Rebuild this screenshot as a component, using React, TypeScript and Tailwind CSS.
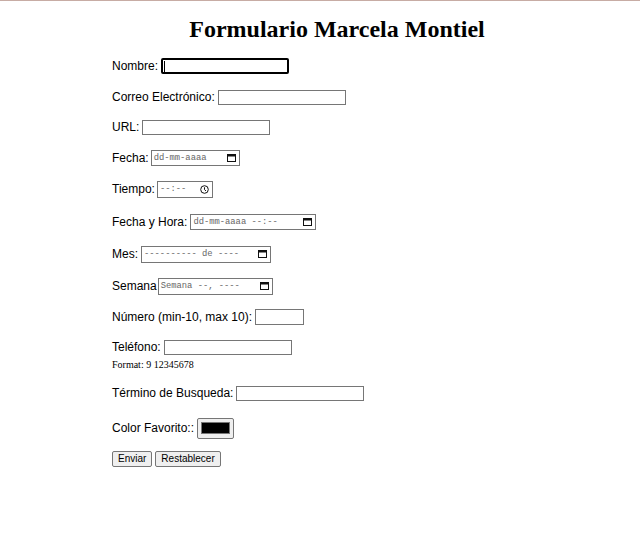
import React from "react";

const Cal = () => (
  <svg width="9" height="8" viewBox="0 0 9 8" className="shrink-0">
    <rect x="0.5" y="0.5" width="8" height="7" fill="none" stroke="#111" strokeWidth="1" />
    <rect x="0.5" y="0.5" width="8" height="2" fill="#111" />
  </svg>
);

const Clock = () => (
  <svg width="9" height="9" viewBox="0 0 9 9" className="shrink-0">
    <circle cx="4.5" cy="4.5" r="3.8" fill="none" stroke="#111" strokeWidth="1" />
    <path d="M4.5 2.3 V4.6 L6 6" fill="none" stroke="#111" strokeWidth="1" />
  </svg>
);

const TextBox = () => (
  <div className="ml-[3px] h-[15px] w-[128px] border border-[#767676] bg-white" />
);

const ph = "font-['Liberation_Mono',monospace] text-[8.8px] text-[#666] whitespace-pre leading-none";

export default function App() {
  return (
    <div className="w-[640px] h-[534px] bg-white border-t border-[#c7aca4] font-['Liberation_Sans',Arial,sans-serif] text-[12px] text-black">
      <div className="pl-[112px] flex flex-col items-start">
        <h1 className="mt-[14px] w-[450px] h-[28px] text-center font-['Liberation_Serif',serif] font-bold text-[24px] leading-[28px]">
          Formulario Marcela Montiel
        </h1>

        {/* Nombre */}
        <div className="mt-[13px] h-[20px] flex items-center">
          <span>Nombre:</span>
          <div className="ml-[3px] h-[16px] w-[128px] border-2 border-black rounded-[2px] bg-white flex items-center pl-[1px]">
            <div className="w-px h-[11px] bg-black" />
          </div>
        </div>

        {/* Correo */}
        <div className="mt-[11px] h-[20px] flex items-center">
          <span>Correo Electrónico:</span>
          <TextBox />
        </div>

        {/* URL */}
        <div className="mt-[10px] h-[20px] flex items-center">
          <span>URL:</span>
          <TextBox />
        </div>

        {/* Fecha */}
        <div className="mt-[11px] h-[20px] flex items-center">
          <span>Fecha:</span>
          <div className="ml-[2px] h-[16px] w-[89px] border border-[#767676] bg-white flex items-center justify-between pl-[2px] pr-[3px]">
            <span className={ph}>dd-mm-aaaa</span>
            <Cal />
          </div>
        </div>

        {/* Tiempo */}
        <div className="mt-[11px] h-[20px] flex items-center">
          <span>Tiempo:</span>
          <div className="ml-[2px] h-[17px] w-[56px] border border-[#767676] bg-white flex items-center justify-between pl-[2px] pr-[3px]">
            <span className={ph}>--:--</span>
            <Clock />
          </div>
        </div>

        {/* Fecha y Hora */}
        <div className="mt-[13px] h-[20px] flex items-center">
          <span>Fecha y Hora:</span>
          <div className="ml-[3px] h-[16px] w-[126px] border border-[#767676] bg-white flex items-center justify-between pl-[2px] pr-[3px]">
            <span className={ph}>dd-mm-aaaa --:--</span>
            <Cal />
          </div>
        </div>

        {/* Mes */}
        <div className="mt-[12px] h-[20px] flex items-center">
          <span>Mes:</span>
          <div className="ml-[3px] h-[17px] w-[130px] border border-[#767676] bg-white flex items-center justify-between pl-[2px] pr-[3px]">
            <span className={ph}>---------- de ----</span>
            <Cal />
          </div>
        </div>

        {/* Semana */}
        <div className="mt-[12px] h-[20px] flex items-center">
          <span>Semana</span>
          <div className="ml-[1px] h-[17px] w-[115px] border border-[#767676] bg-white flex items-center justify-between pl-[2px] pr-[3px]">
            <span className={ph}>Semana --, ----</span>
            <Cal />
          </div>
        </div>

        {/* Número */}
        <div className="mt-[11px] h-[20px] flex items-center">
          <span>Número (min-10, max 10):</span>
          <div className="ml-[3px] h-[16px] w-[49px] border border-[#767676] bg-white" />
        </div>

        {/* Teléfono */}
        <div className="mt-[10px] h-[20px] flex items-center">
          <span>Teléfono:</span>
          <TextBox />
        </div>
        <div className="mt-[2px] h-[12px] leading-[12px] font-['Liberation_Serif',serif] text-[10px]">
          Format: 9 12345678
        </div>

        {/* Término */}
        <div className="mt-[12px] h-[20px] flex items-center">
          <span>Término de Busqueda:</span>
          <TextBox />
        </div>

        {/* Color */}
        <div className="mt-[15px] h-[20px] flex items-center">
          <span>Color Favorito::</span>
          <div className="ml-[3px] h-[21px] w-[37px] border border-[#767676] rounded-[2px] bg-[#efefef] flex items-center justify-center">
            <div className="w-[29px] h-[12px] bg-black border border-[#777]" />
          </div>
        </div>

        {/* Buttons */}
        <div className="mt-[11px] h-[20px] flex items-center gap-[3px]">
          <button className="h-[16px] px-[5px] border border-[#767676] rounded-[2px] bg-[#efefef] text-[10px] leading-none">
            Enviar
          </button>
          <button className="h-[16px] px-[5px] border border-[#767676] rounded-[2px] bg-[#efefef] text-[10px] leading-none">
            Restablecer
          </button>
        </div>
      </div>
    </div>
  );
}
